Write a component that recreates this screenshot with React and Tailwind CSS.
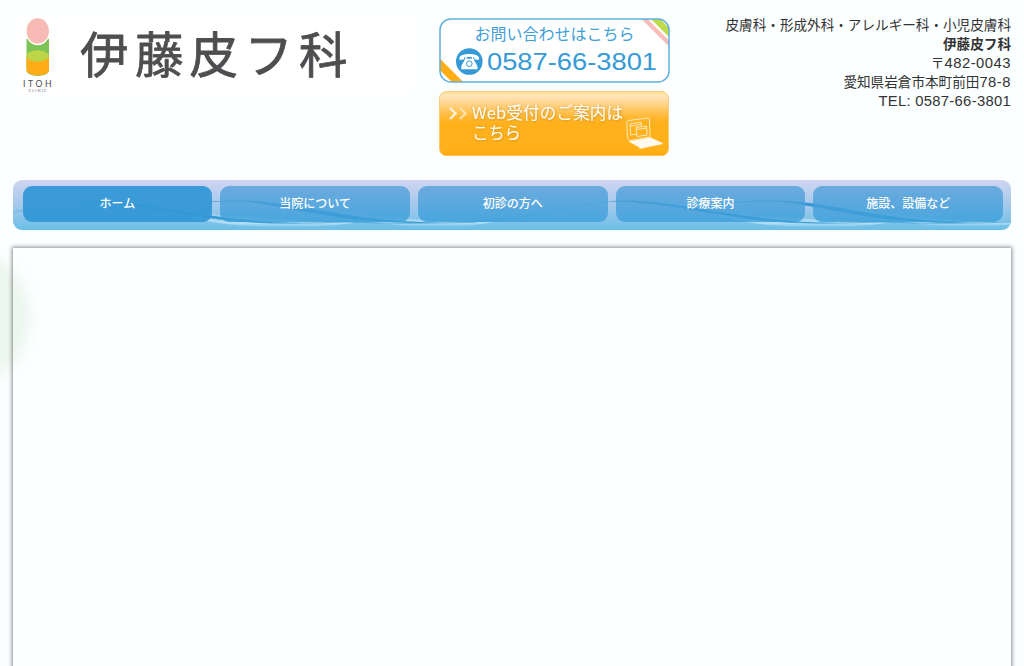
import React from 'react';

const NAV = ['ホーム', '当院について', '初診の方へ', '診療案内', '施設、設備など'];

function Logo() {
  return (
    <a href="#" className="block h-[79px] w-[401px] bg-white">
      <svg width="401" height="79" viewBox="0 0 401 79" fontFamily="'Noto Sans CJK JP', sans-serif">
        <path d="M13.5 24 V56 A11.3 5.5 0 0 0 36 56 V24 Z" fill="#7dc355" />
        <path d="M13.5 41 V55.5 A11.3 5.5 0 0 0 36 55.5 V41 Z" fill="#ffac16" />
        <ellipse cx="24.7" cy="41" rx="11.3" ry="5.7" fill="#bcd648" />
        <ellipse cx="24.7" cy="16.5" rx="12.1" ry="13.7" fill="#fff" />
        <ellipse cx="24.7" cy="16" rx="11.2" ry="12.8" fill="#f8bab4" />
        <text x="10" y="71.5" fontSize="8.6" fill="#4a4a4a" textLength="28.5" fontFamily="Lato, sans-serif">ITOH</text>
        <text x="15.5" y="76.5" fontSize="4" fill="#777" textLength="18" fontFamily="Lato, sans-serif">CLINIC</text>
        <g fill="#4d4e50" stroke="#4d4e50" strokeWidth="0.8" strokeLinejoin="round" fontSize="48.5">
          <text x="67" y="58">伊</text>
          <text x="122" y="58">藤</text>
          <text x="176.5" y="58">皮</text>
          <text x="231.5" y="58">フ</text>
          <text x="286" y="58">科</text>
        </g>
      </svg>
    </a>
  );
}

function PhoneBanner() {
  return (
    <a href="#" className="block h-[65px] w-[231px]">
      <svg width="231" height="65" viewBox="0 0 231 65">
        <defs>
          <clipPath id="phoneClip">
            <rect x="1" y="1" width="229" height="63" rx="11" />
          </clipPath>
        </defs>
        <rect x="1" y="1" width="229" height="63" rx="11" fill="#fff" />
        <g clipPath="url(#phoneClip)">
          <path d="M203 -1.5 L233 28.5" stroke="#f9bdb9" strokeWidth="4.4" />
          <path d="M213 -2.5 L233 17.5" stroke="#bfdb49" strokeWidth="6.5" />
          <path d="M-3 42.5 L23 68.5" stroke="#ffac16" strokeWidth="8" />
        </g>
        <rect x="1" y="1" width="229" height="63" rx="11" fill="none" stroke="#5fb0df" strokeWidth="1.5" />
        <text x="35.5" y="22.3" fontSize="16" fill="#419fd8" textLength="160" fontFamily="'Noto Sans CJK JP', sans-serif">お問い合わせはこちら</text>
        <circle cx="30.3" cy="43.5" r="13.3" fill="#359ad6" />
        <path d="M20.3 40 C21 34.5 39.5 34.5 40.2 40 L39.8 42 L35.5 41.3 L35 38.9 H25.5 L25 41.3 L20.8 42 Z" fill="#fff" />
        <path d="M27 38 V41 M33.5 38 V41" stroke="#fff" strokeWidth="1.5" />
        <path d="M26 40.8 H34.7 C35.5 44 38.5 46.5 38.5 49.5 V51.3 H22.2 V49.5 C22.2 46.5 25.3 44 26 40.8 Z" fill="#fff" />
        <circle cx="30.3" cy="45.8" r="2.8" fill="#fff" stroke="#359ad6" strokeWidth="1" />
        <text x="48" y="52" fontSize="24.5" fill="#359ad6" textLength="170" lengthAdjust="spacingAndGlyphs" fontFamily="'Liberation Sans', sans-serif">0587-66-3801</text>
      </svg>
    </a>
  );
}

function WebBanner() {
  return (
    <a href="#" className="block h-[65px] w-[230px]">
      <svg width="230" height="65" viewBox="0 0 230 65">
        <defs>
          <linearGradient id="webBg" x1="0" y1="0" x2="0" y2="1">
            <stop offset="0" stopColor="#ffd98c" />
            <stop offset="0.06" stopColor="#ffe6bb" />
            <stop offset="0.15" stopColor="#ffd99c" />
            <stop offset="0.4" stopColor="#ffb730" />
            <stop offset="0.5" stopColor="#ffb11c" />
            <stop offset="0.88" stopColor="#ffb11c" />
            <stop offset="1" stopColor="#ffa90d" />
          </linearGradient>
          <filter id="textShadow" x="-10%" y="-20%" width="120%" height="150%">
            <feDropShadow dx="0.4" dy="0.5" stdDeviation="0.8" floodColor="#a06a00" floodOpacity="0.6" />
          </filter>
        </defs>
        <rect x="0.5" y="0.5" width="229" height="64.3" rx="7" fill="url(#webBg)" stroke="#f9c566" strokeWidth="0.8" />
        <g fill="#fffdf3" filter="url(#textShadow)" fontSize="16.5" fontFamily="'Noto Sans CJK JP', sans-serif">
          <text x="33" y="28.3" textLength="151">Web受付のご案内は</text>
          <text x="33" y="48" textLength="49">こちら</text>
        </g>
        <path d="M11 17 L16.5 22.5 L11 28" fill="none" stroke="#fff4dc" strokeWidth="2.4" />
        <path d="M21 17 L26.5 22.5 L21 28" fill="none" stroke="#ffe3ab" strokeWidth="2.4" />
        <g fill="none" stroke="#ffe9c0" strokeWidth="1">
          <path d="M190 29.5 L208 27 Q210.5 27 210.5 29 L211 46 L192 49.5 Q188.5 49.5 188.5 46 L187.7 32 Q187.7 30 190 29.5 Z" />
          <path d="M191 33 L202 31.2 L202.3 35 M191 33 L191.7 44 L197.5 43 M191.2 35.2 L202 33.5" />
          <path d="M197 36.5 L207.5 35 L208 44 L198 45.5 Z M197.2 38.5 L207.5 37" />
        </g>
        <path d="M189.5 50.5 L211.5 46.5 L223.5 52 L200.5 56.5 Z" fill="#fffaf0" />
        <path d="M200.5 57 L223.5 52.3" stroke="#fff" strokeWidth="1.3" />
      </svg>
    </a>
  );
}

// two ribbons crossing each other, repeated along the bar
function Wave({ x }) {
  return (
    <g transform={`translate(${x} 0)`}>
      <path d="M90 21 C145 22 180 34 215 36 S300 42 340 43 C290 50 225 48 190 40 S130 22 90 21 Z" fill="url(#glow)" />
      <path d="M230 21 C290 23 320 32 360 36 S440 42 480 42 C440 50 385 47 350 40 S270 24 230 21 Z" fill="url(#glow)" />
      <path d="M-80 42 C-10 39 30 20 90 20.5 C35 20.3 -10 40.3 -80 42 Z" fill="none" stroke="#3f9fd6" strokeOpacity="0.35" strokeWidth="0.6" />
      <path d="M60 21.5 C130 16.5 185 42 290 43 C190 46.5 130 20 60 21.5 Z" fill="#1889cb" fillOpacity="0.8" />
      <path d="M165 27 C185 22 205 20 230 20.5 C290 22 335 42 430 42.5 C330 46 275 25 230 21.5 C205 20.5 185 23 165 27 Z" fill="#1889cb" fillOpacity="0.8" />
      <path d="M190 37 C240 45 300 44 345 41 M340 42 C380 44 420 43.5 464 42" fill="none" stroke="#45a3d7" strokeOpacity="0.8" strokeWidth="0.9" />
    </g>
  );
}

function Nav() {
  return (
    <nav className="relative mt-6 h-[50px] overflow-hidden rounded-[9px] bg-linear-to-b from-[#d0d5f1] via-[#a4c9ec] to-[#69bfe8]">
      <svg className="absolute inset-0" width="998" height="50" viewBox="0 0 998 50">
        <defs>
          <linearGradient id="glow" x1="0" y1="0" x2="0" y2="1">
            <stop offset="0.3" stopColor="#fff" stopOpacity="0" />
            <stop offset="0.85" stopColor="#dcf4fd" stopOpacity="0.55" />
            <stop offset="1" stopColor="#dcf4fd" stopOpacity="0" />
          </linearGradient>
        </defs>
        <Wave x={0} />
        <Wave x={534} />
      </svg>
      <ul className="relative grid h-full grid-cols-5 gap-x-2 pt-1.5 pr-2 pb-2 pl-[9.5px]">
        {NAV.map((label, i) => (
          <li key={label}>
            <a
              href="#"
              className={`flex h-9 items-center justify-center rounded-[9px] text-[12px] leading-none font-medium text-white ${
                i === 0 ? 'bg-[#3498d6]/95' : 'bg-linear-to-b from-[#54a0da]/80 to-[#3a9fda]/80'
              }`}
            >
              <span className="-mt-0.5">{label}</span>
            </a>
          </li>
        ))}
      </ul>
    </nav>
  );
}

export default function App() {
  return (
    <div className="relative h-[666px] overflow-hidden bg-[#fbffff] px-[13px] pt-[15px] font-['Noto_Sans_CJK_JP',sans-serif] text-[#333]">
      <div className="absolute top-[248px] -left-[110px] h-[140px] w-[141px] rounded-full bg-[#edf7f1] blur-[5px]" />
      <header className="relative flex h-[141px] items-start">
        <Logo />
        <div className="mt-[3px] ml-[25px] flex flex-col gap-2">
          <PhoneBanner />
          <WebBanner />
        </div>
        <div className="ml-auto text-right text-[13.6px] leading-[18.8px]">
          <p>皮膚科・形成外科・アレルギー科・小児皮膚科</p>
          <p className="font-bold">伊藤皮フ科</p>
          <p>〒<span className="font-['Liberation_Sans',sans-serif] text-[14.8px] tracking-[0.5px]">482-0043</span></p>
          <p>愛知県岩倉市本町前田<span className="font-['Liberation_Sans',sans-serif] text-[14.8px] tracking-[0.5px]">78-8</span></p>
          <p className="font-['Liberation_Sans',sans-serif] text-[14.8px] tracking-[0.3px]">TEL: 0587-66-3801</p>
        </div>
      </header>
      <Nav />
      <main className="relative mt-[18px] h-[500px] shadow-[0_0_4px_1px_rgba(0,0,0,0.45)]" />
    </div>
  );
}
